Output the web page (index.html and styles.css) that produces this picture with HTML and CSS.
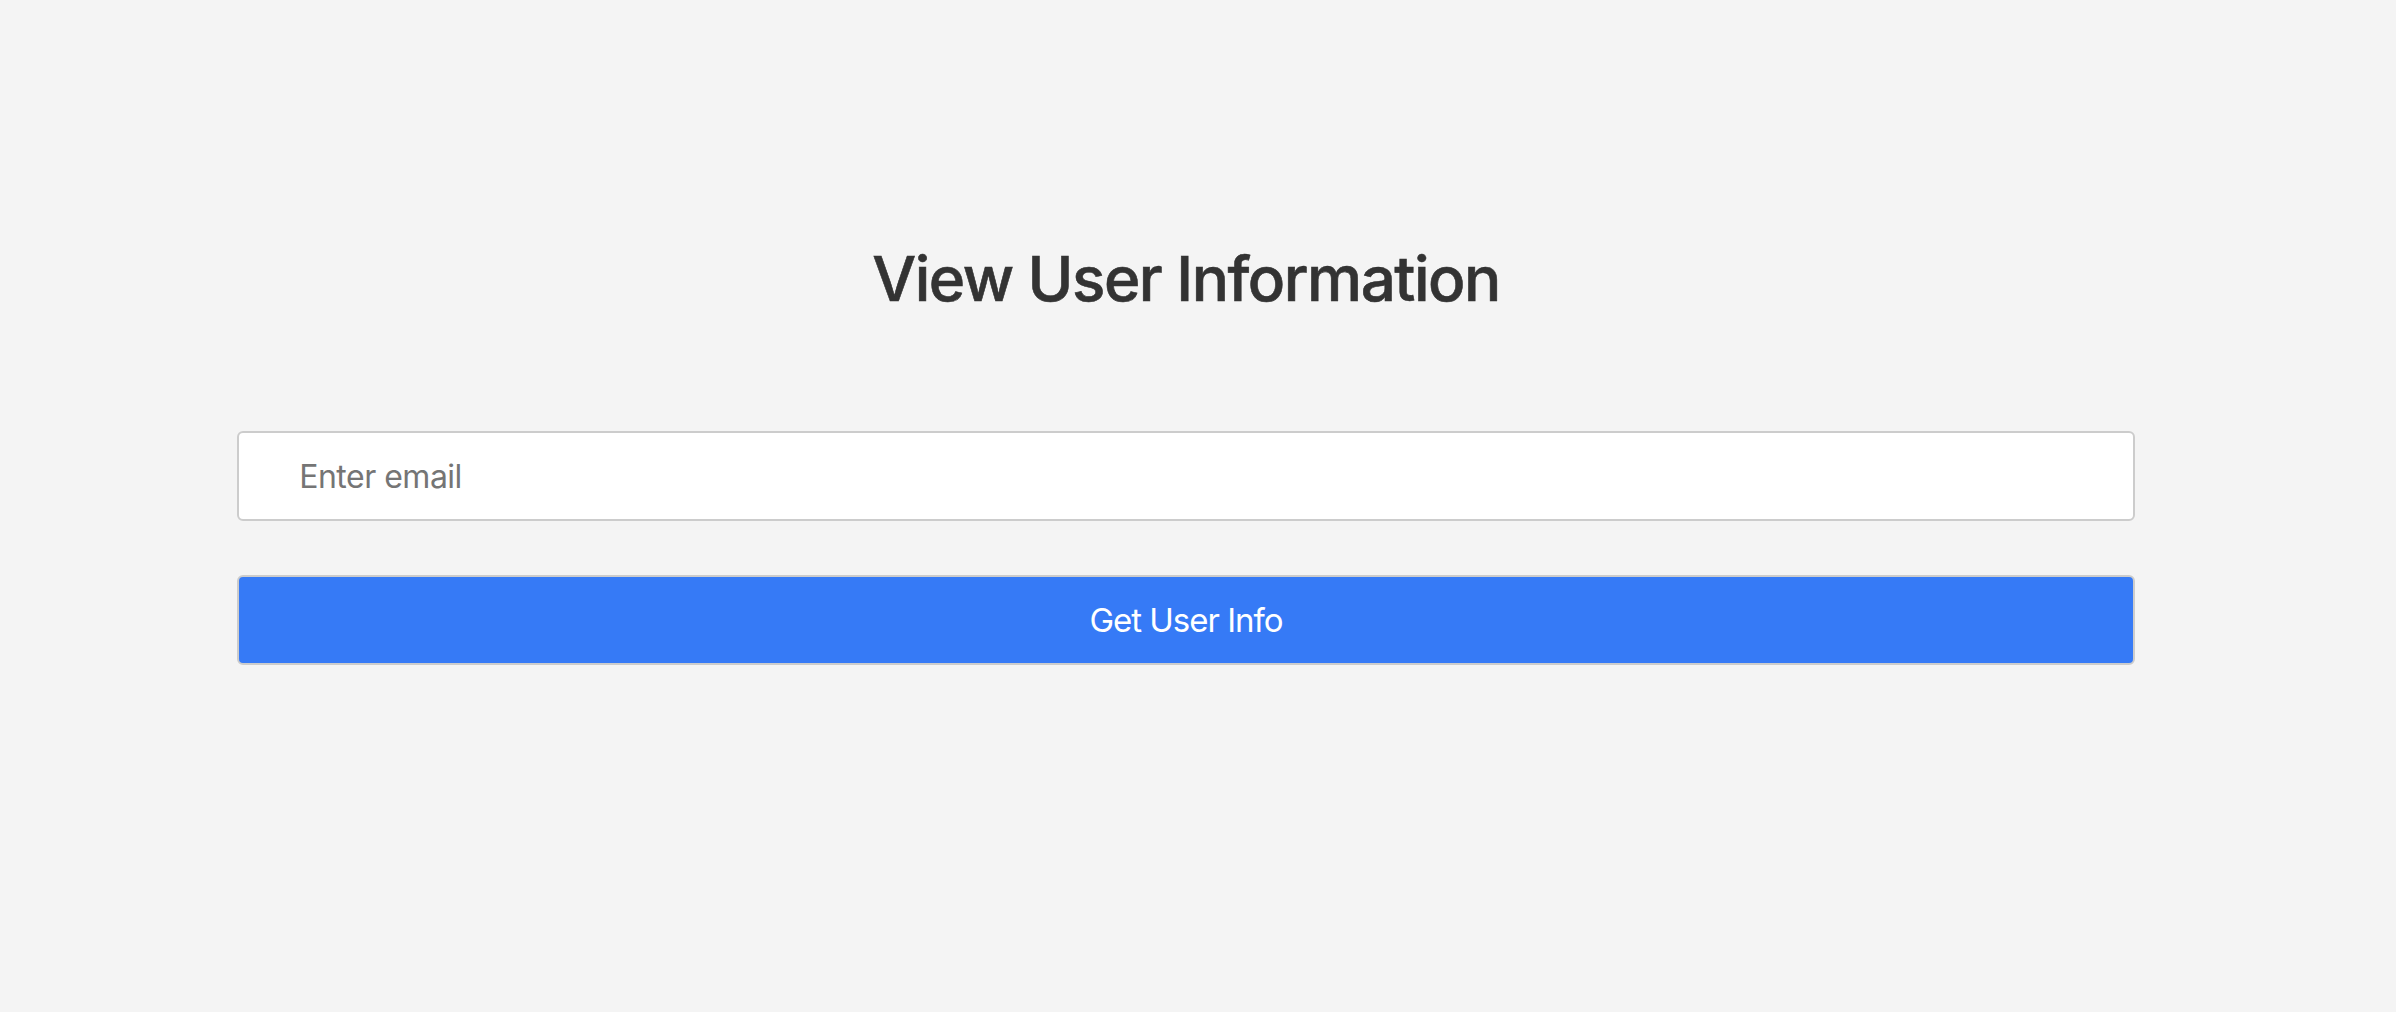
FILE: index.html
```html
<!DOCTYPE html>
<html lang="en">
<head>
<meta charset="utf-8">
<title>View User Information</title>
<link rel="stylesheet" href="styles.css">
</head>
<body>
<div class="page">
  <main class="container">
    <h1 class="title">View User Information</h1>
    <form class="form">
      <input class="email" type="email" placeholder="Enter email">
      <button class="submit" type="button">Get User Info</button>
    </form>
  </main>
</div>
</body>
</html>
```
FILE: styles.css
```css
html, body {
  margin: 0;
  padding: 0;
  background: #f4f4f4;
}
body {
  font-family: Inter, "Noto Sans", "Liberation Sans", sans-serif;
  color: #333333;
}
.page {
  padding-right: 24px;
}
.container {
  width: 80%;
  margin: 0 auto;
  padding-top: 242px;
}
.title {
  margin: 0;
  font-size: 62px;
  font-weight: 500;
  line-height: 74px;
  letter-spacing: -1.5px;
  text-align: center;
  color: #333333;
  -webkit-text-stroke: 0.6px #333333;
}
.form {
  display: flex;
  flex-direction: column;
  gap: 54px;
  margin-top: 115px;
}
.email {
  box-sizing: border-box;
  height: 90px;
  width: 100%;
  margin: 0;
  padding: 0 0 0 60px;
  border: 2px solid #cccccc;
  border-radius: 6px;
  background: #ffffff;
  font-family: inherit;
  font-size: 32px;
  letter-spacing: -0.5px;
  color: #333333;
  outline: none;
}
.email::placeholder {
  color: #757575;
  opacity: 1;
}
.submit {
  box-sizing: border-box;
  height: 90px;
  width: 100%;
  margin: 0;
  padding: 0;
  border: 2px solid #cccccc;
  border-radius: 6px;
  background: #367af6;
  color: #ffffff;
  font-family: inherit;
  font-size: 33px;
  letter-spacing: -1px;
  cursor: pointer;
}
```
